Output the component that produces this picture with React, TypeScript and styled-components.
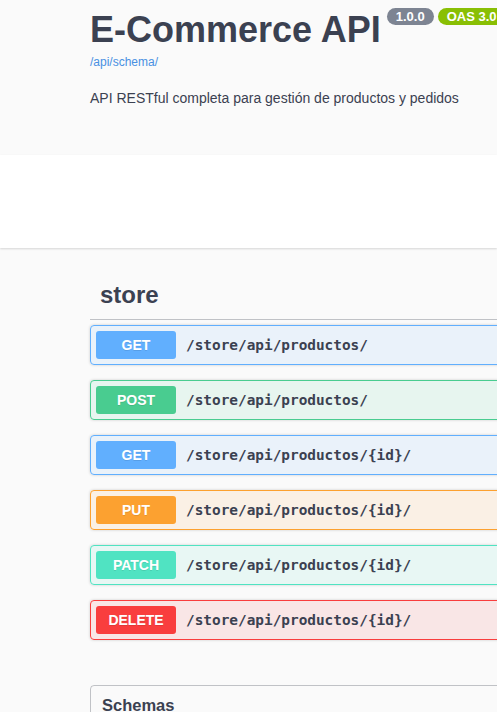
import React from "react";
import styled, { createGlobalStyle } from "styled-components";

const Global = createGlobalStyle`
  html, body { margin: 0; padding: 0; background: #fafafa; overflow: hidden; }
  body { font-family: "Liberation Sans", Arial, sans-serif; color: #3b4151; }
`;

const Page = styled.div`
  width: 100%;
  min-height: 712px;
  background: #fafafa;
`;

const Info = styled.section`
  padding: 9px 0 0 90px;
  height: 155px;
  box-sizing: border-box;
`;

const TitleRow = styled.div`
  display: flex;
  align-items: flex-start;
  white-space: nowrap;
`;

const Title = styled.h2`
  margin: 0;
  font-size: 36px;
  font-weight: 700;
  color: #3b4151;
  line-height: 41px;
`;

const Badge = styled.span<{ $bg: string; $gap: number }>`
  display: inline-block;
  margin: -1px 0 0 ${(p) => p.$gap}px;
  padding: 2px 9px;
  border-radius: 57px;
  background: ${(p) => p.$bg};
  color: #fff;
  font-size: 13px;
  font-weight: 700;
  line-height: 13px;
`;

const SchemaLink = styled.a`
  display: block;
  margin-top: 5px;
  font-size: 12px;
  color: #4990e2;
  text-decoration: none;
`;

const Description = styled.p`
  margin: 21px 0 0;
  font-size: 14px;
  color: #3b4151;
`;

const SchemeContainer = styled.section`
  background: #fff;
  height: 93px;
  box-shadow: 0 1px 2px 0 rgba(0, 0, 0, 0.15);
`;

const Wrapper = styled.div`
  margin-left: 90px;
  width: 800px;
  padding-top: 23px;
`;

const TagHeader = styled.h3`
  margin: 0 0 5px;
  padding: 10px 20px 10px 10px;
  font-size: 24px;
  font-weight: 700;
  line-height: 27.6px;
  color: #3b4151;
  border-bottom: 1px solid rgba(59, 65, 81, 0.3);
`;

const OpList = styled.div`
  display: flex;
  flex-direction: column;
  gap: 15px;
`;

const Opblock = styled.div<{ $c: string; $bg: string }>`
  display: flex;
  align-items: center;
  padding: 5px;
  border: 1px solid ${(p) => p.$c};
  border-radius: 4px;
  background: ${(p) => p.$bg};
  box-shadow: 0 0 3px rgba(0, 0, 0, 0.19);
`;

const Method = styled.span<{ $c: string }>`
  width: 80px;
  height: 28px;
  display: flex;
  align-items: center;
  justify-content: center;
  border-radius: 3px;
  background: ${(p) => p.$c};
  color: #fff;
  font-size: 14px;
  font-weight: 700;
  text-shadow: 0 1px 0 rgba(0, 0, 0, 0.1);
`;

const Path = styled.span`
  padding: 0 10px;
  font-family: "DejaVu Sans Mono", "Liberation Mono", monospace;
  font-size: 14.4px;
  font-weight: 700;
  color: #3b4151;
`;

const Models = styled.section`
  margin-top: 45px;
  border: 1px solid rgba(59, 65, 81, 0.3);
  border-radius: 4px;
  height: 80px;
`;

const ModelsTitle = styled.h4`
  margin: 0;
  padding: 10px 20px 10px 11px;
  font-size: 16.5px;
  font-weight: 700;
  color: #3b4151;
`;

const ops = [
  { m: "GET", c: "#61affe", bg: "rgba(97,175,254,.1)", p: "/store/api/productos/" },
  { m: "POST", c: "#49cc90", bg: "rgba(73,204,144,.1)", p: "/store/api/productos/" },
  { m: "GET", c: "#61affe", bg: "rgba(97,175,254,.1)", p: "/store/api/productos/{id}/" },
  { m: "PUT", c: "#fca130", bg: "rgba(252,161,48,.1)", p: "/store/api/productos/{id}/" },
  { m: "PATCH", c: "#50e3c2", bg: "rgba(80,227,194,.1)", p: "/store/api/productos/{id}/" },
  { m: "DELETE", c: "#f93e3e", bg: "rgba(249,62,62,.1)", p: "/store/api/productos/{id}/" },
];

export default function App() {
  return (
    <Page>
      <Global />
      <Info>
        <TitleRow>
          <Title>E-Commerce API</Title>
          <Badge $bg="#7d8492" $gap={6}>1.0.0</Badge>
          <Badge $bg="#89bf04" $gap={4}>OAS 3.0</Badge>
        </TitleRow>
        <SchemaLink href="#">/api/schema/</SchemaLink>
        <Description>API RESTful completa para gestión de productos y pedidos</Description>
      </Info>
      <SchemeContainer />
      <Wrapper>
        <TagHeader>store</TagHeader>
        <OpList>
          {ops.map((o, i) => (
            <Opblock key={i} $c={o.c} $bg={o.bg}>
              <Method $c={o.c}>{o.m}</Method>
              <Path>{o.p}</Path>
            </Opblock>
          ))}
        </OpList>
        <Models>
          <ModelsTitle>Schemas</ModelsTitle>
        </Models>
      </Wrapper>
    </Page>
  );
}
